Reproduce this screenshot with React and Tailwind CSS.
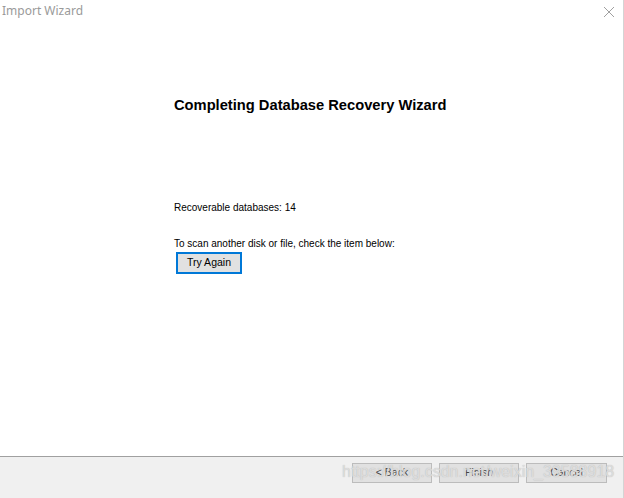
export default function App() {
    return (
        <div className="w-[624px] h-[498px] bg-white flex flex-col overflow-hidden relative border-r border-[#d4d4d4]" style={{ fontFamily: '"Noto Sans", "Liberation Sans", sans-serif' }}>
            {/* Title bar */}
            <div className="h-[22px] flex items-center justify-between pl-[2px] pr-[8px]">
                <span className="text-[12px] text-[#9a9a9a]">Import Wizard</span>
                <svg width="12" height="12" viewBox="0 0 12 12" className="mt-[1px]">
                    <path d="M1 1 L11 11 M11 1 L1 11" stroke="#a0a0a0" strokeWidth="1" />
                </svg>
            </div>

            {/* Content */}
            <div className="flex-1 flex flex-col pl-[174px]" style={{ fontFamily: '"Liberation Sans", Arial, sans-serif' }}>
                <h1 className="mt-[72px] text-[14.7px] font-bold text-black">
                    Completing Database Recovery Wizard
                </h1>
                <p className="mt-[85px] text-[10px] leading-[14px] text-black">Recoverable databases: 14</p>
                <p className="mt-[22px] text-[10px] leading-[14px] text-black">To scan another disk or file, check the item below:</p>
                <button className="mt-[1px] ml-[2px] w-[66px] h-[22px] bg-[#e1e1e1] border-2 border-[#0078d7] text-[10.5px] text-black">
                    Try Again
                </button>
            </div>

            {/* Footer */}
            <div className="h-[42px] bg-[#f0f0f0] border-t border-[#a0a0a0] flex items-start justify-end gap-[7px] pt-[6px] pr-[16px]" style={{ fontFamily: '"Liberation Sans", Arial, sans-serif' }}>
                <button className="w-[80px] h-[20px] bg-[#e1e1e1] border border-[#bcbcbc] text-[10.5px] text-[#444]">&lt; Back</button>
                <button className="w-[80px] h-[20px] bg-[#e1e1e1] border border-[#bcbcbc] text-[10.5px] text-[#444]">Finish</button>
                <button className="w-[81px] h-[20px] bg-[#e1e1e1] border border-[#bcbcbc] text-[10.5px] text-[#444]">Cancel</button>
            </div>

            {/* Watermark */}
            <div className="absolute left-[342px] top-[462px] text-[16px] leading-[20px] text-[#e6e6e6]/80 whitespace-nowrap" style={{ fontFamily: '"Liberation Sans", Arial, sans-serif', textShadow: '0 0 1px #b0b0b0' }}>
                https://blog.csdn.net/weixin_39588918
            </div>
        </div>
    );
}
